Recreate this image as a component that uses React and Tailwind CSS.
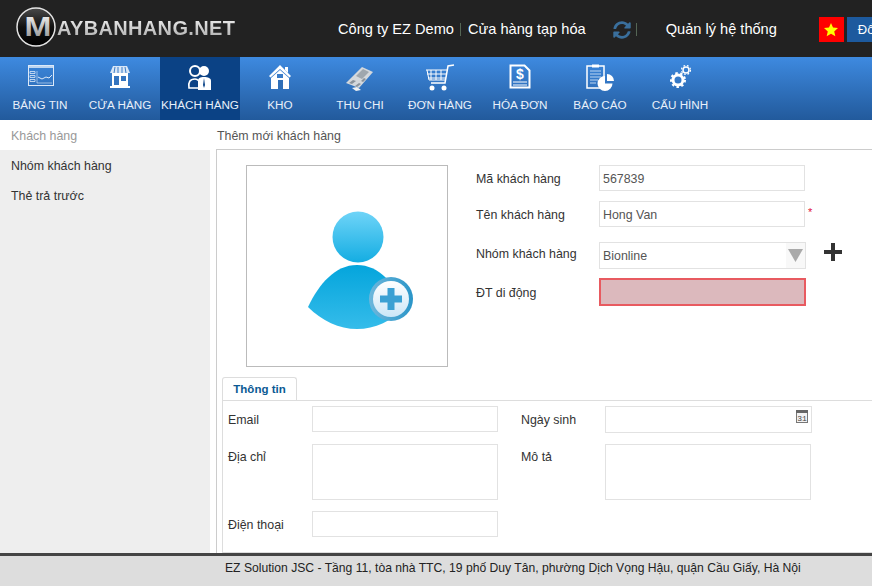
import React from 'react';
import { FaSyncAlt } from 'react-icons/fa';

const IconDashboard = () => (
  <svg viewBox="0 0 32 28" className="w-8 h-7 text-[#dce9f8]">
    <rect x="4.500" y="1.500" width="25" height="20" fill="none" stroke="currentColor" />
    <rect x="4" y="1" width="26" height="3" fill="currentColor" opacity="0.8" />
    <path d="M6 7.500h5v2H6zM6 11.500h5v2H6zM6 15.500h5v2H6z" fill="none" stroke="currentColor" strokeWidth="0.800" />
    <path d="M13 7v12h15" fill="none" stroke="currentColor" opacity="0.6" />
    <path d="M14 13l4 2 4-2 3 1 3-3" fill="none" stroke="currentColor" />
  </svg>
);

const IconStore = () => (
  <svg viewBox="0 0 32 28" className="w-8 h-7 text-white">
    <path d="M9 2h14l3 7H6z" fill="currentColor" opacity="0.8" />
    <path d="M11 3l-1 6M14 3v6M18 3v6M21 3l1 6" stroke="#3a7cc8" />
    <rect x="8" y="9" width="16" height="13" fill="currentColor" />
    <rect x="10" y="12" width="5" height="9" fill="#3474bf" />
    <rect x="17" y="12" width="5" height="5" fill="#3474bf" />
    <rect x="6" y="22" width="20" height="2" fill="currentColor" />
  </svg>
);

const IconCustomer = () => (
  <svg viewBox="0 0 32 28" className="w-8 h-7 text-white">
    <circle cx="11" cy="7" r="5" fill="none" stroke="currentColor" strokeWidth="2" />
    <path d="M5 24c-1-6 1-9 6-9 2 0 3 1 4 2v7z" fill="none" stroke="currentColor" strokeWidth="1.600" />
    <circle cx="20" cy="7" r="5" fill="currentColor" />
    <path d="M14 26V17c0-3 2-4 6-4s7 1 7 4v9z" fill="currentColor" />
    <path d="M20 14l-1 7 1 3 1-3z" fill="#0b4488" />
  </svg>
);

const IconHouse = () => (
  <svg viewBox="0 0 32 28" className="w-8 h-7 text-white">
    <path d="M16 1L5 12l1.500 1.500L16 5l9.500 8.500L27 12z" fill="currentColor" />
    <path d="M21 3h3v6l-3-3z" fill="currentColor" />
    <path d="M7 14l9-8 9 8v11H7z" fill="currentColor" />
    <rect x="13" y="10" width="6" height="4" fill="#3a7cc8" />
    <rect x="14" y="16" width="5" height="9" fill="#2f6fb8" />
  </svg>
);

const IconCash = () => (
  <svg viewBox="0 0 32 28" className="w-8 h-7 text-[#d4d8dc]">
    <path d="M2 19L18 3l11 5-14 16z" fill="currentColor" />
    <path d="M12 12l7-7 6 3-7 7z" fill="#9fa7ae" />
    <path d="M5 19l4-3 3 1-4 3zM11 22l4-3 2 1-4 3zM17 17l3-3 2 1-3 3z" fill="#8b939b" />
    <path d="M8 24l4 3 5-1-4-3z" fill="#eef0f2" />
  </svg>
);

const IconCart = () => (
  <svg viewBox="0 0 32 28" className="w-8 h-7 text-white">
    <path d="M30 1l-6 1-3 17H7" fill="none" stroke="currentColor" strokeWidth="1.500" />
    <path d="M2 6h21M3 10h19M4 14h18M7 6v10M12 6v10M17 6v10M3 6l2 10h16" fill="none" stroke="currentColor" />
    <circle cx="8" cy="24" r="2.500" fill="currentColor" />
    <circle cx="20" cy="24" r="2.500" fill="currentColor" />
  </svg>
);

const IconInvoice = () => (
  <svg viewBox="0 0 32 28" className="w-8 h-7 text-white">
    <path d="M6.500 1.500h14l5 5v17h-19z" fill="none" stroke="currentColor" strokeWidth="2" />
    <text x="16" y="15" textAnchor="middle" fill="currentColor" className="font-['Liberation_Sans',sans-serif] font-bold text-[14px]">$</text>
    <path d="M9 18h14M9 21h14" stroke="currentColor" />
  </svg>
);

const IconReport = () => (
  <svg viewBox="0 0 32 28" className="w-8 h-7 text-white">
    <rect x="3" y="2" width="17" height="22" fill="none" stroke="currentColor" strokeWidth="1.500" />
    <rect x="8" y="0.500" width="7" height="3" fill="currentColor" />
    <path d="M6 7h11M6 10h11M6 13h11M6 16h8M6 19h6" stroke="#bcd6f2" />
    <path d="M21 12a7.500 7.500 0 1 0 7.500 7.500H21z" fill="currentColor" />
    <path d="M23 10a7 7 0 0 1 7 7h-7z" fill="currentColor" />
  </svg>
);

const IconGear = () => (
  <svg viewBox="0 0 32 28" className="w-8 h-7 text-white">
    <circle cx="14" cy="16" r="5" fill="none" stroke="currentColor" strokeWidth="3" />
    <circle cx="14" cy="16" r="7" fill="none" stroke="currentColor" strokeWidth="2" strokeDasharray="2.500 2.500" />
    <circle cx="22" cy="6" r="3" fill="none" stroke="currentColor" strokeWidth="1.500" />
    <circle cx="22" cy="6" r="4.500" fill="none" stroke="currentColor" strokeWidth="1.200" strokeDasharray="1.800 1.800" />
  </svg>
);

const navItems = [
  { label: 'BẢNG TIN', icon: IconDashboard },
  { label: 'CỬA HÀNG', icon: IconStore },
  { label: 'KHÁCH HÀNG', icon: IconCustomer, active: true },
  { label: 'KHO', icon: IconHouse },
  { label: 'THU CHI', icon: IconCash },
  { label: 'ĐƠN HÀNG', icon: IconCart },
  { label: 'HÓA ĐƠN', icon: IconInvoice },
  { label: 'BÁO CÁO', icon: IconReport },
  { label: 'CẤU HÌNH', icon: IconGear },
];

const Logo = () => (
  <div className="flex items-center pl-[15px] pb-[3px] w-[338px] shrink-0">
    <svg viewBox="0 0 42 42" className="w-[42px] h-[42px] shrink-0 mb-[2px]">
      <defs>
        <linearGradient id="mark" x1="0" y1="0" x2="0" y2="1">
          <stop offset="0" stopColor="#ffffff" />
          <stop offset="1" stopColor="#8a8a8a" />
        </linearGradient>
        <linearGradient id="disc" x1="0" y1="0" x2="0" y2="1">
          <stop offset="0" stopColor="#4a4a4a" />
          <stop offset="0.500" stopColor="#111111" />
          <stop offset="1" stopColor="#000000" />
        </linearGradient>
      </defs>
      <circle cx="21" cy="21" r="19" fill="url(#disc)" stroke="#e4e4e4" strokeWidth="1.500" />
      <text x="0" y="0" textAnchor="middle" fill="url(#mark)" transform="translate(23 30) scale(1.150 1)" className="font-['Liberation_Sans',sans-serif] font-bold text-[28px]">M</text>
    </svg>
    <span className="text-[20px] font-bold tracking-[0.35px] bg-gradient-to-b from-white to-[#a0a0a0] bg-clip-text text-transparent">AYBANHANG.NET</span>
  </div>
);

const Field = ({ label, className, labelClass = 'pt-[2px]', children }) => (
  <div className={`flex ${className}`}>
    <span className={`w-[123px] shrink-0 text-[12.4px] text-[#333] ${labelClass}`}>{label}</span>
    {children}
  </div>
);

const inputClass = 'border border-[#e2e2e2] bg-white pl-[3px] pt-[2px] text-[12.4px] text-[#555] outline-none';

const Label = ({ children, className = '' }) => (
  <span className={`text-[12.4px] text-[#333] ${className}`}>{children}</span>
);

export default function App() {
  return (
    <div className="w-[872px] h-[586px] flex flex-col overflow-hidden bg-white font-['Liberation_Sans',Arial,sans-serif]">
      <header className="h-[57px] shrink-0 bg-[#222222] flex items-center pt-[2px] text-[14.6px] text-white whitespace-nowrap">
        <Logo />
        <span>Công ty EZ Demo</span>
        <span className="ml-[6px] h-[13px] border-l border-[#556655]" />
        <span className="ml-[7px]">Cửa hàng tạp hóa</span>
        <FaSyncAlt className="ml-[27px] w-[18px] h-[18px] shrink-0 text-[#3a6f9c]" />
        <span className="ml-[5px] h-[13px] border-l border-[#556655]" />
        <span className="ml-[29px]">Quản lý hệ thống</span>
        <div className="ml-[42px] w-[25px] h-[25px] shrink-0 bg-[#ff0000] flex items-center justify-center">
          <svg viewBox="0 0 20 20" className="w-[14px] h-[14px]">
            <path d="M10 0l2.900 6.600 7.100.7-5.400 4.700 1.600 7-6.200-3.700-6.200 3.700 1.600-7L0 7.300l7.100-.7z" fill="#ffff00" />
          </svg>
        </div>
        <div className="ml-[3px] w-[40px] h-[25px] shrink-0 bg-[#1d5a9e] pl-[11px] text-[13px] leading-[25px]">Đổi</div>
      </header>

      <nav className="h-[63px] shrink-0 flex bg-gradient-to-b from-[#3e8ae0] to-[#225a9c]">
        {navItems.map(({ label, icon: Icon, active }) => (
          <div key={label} className={`w-[80px] flex flex-col items-center pt-[7px] ${active ? 'bg-[#0b4285]' : ''}`}>
            <Icon />
            <span className="text-[11.7px] leading-[26px] text-[#e8f0fa] whitespace-nowrap">{label}</span>
          </div>
        ))}
      </nav>

      <div className="flex-1 flex min-h-0">
        <aside className="w-[210px] shrink-0 flex flex-col text-[12.4px]">
          <div className="h-[30px] pl-[11px] leading-[32px] text-[#999]">Khách hàng</div>
          <div className="flex-1 bg-[#eeeeee] pl-[11px] text-[#333]">
            <div className="h-[30px] leading-[32px]">Nhóm khách hàng</div>
            <div className="h-[30px] leading-[32px]">Thẻ trả trước</div>
          </div>
        </aside>

        <main className="flex-1 ml-[6px] flex flex-col min-w-0">
          <div className="h-[29px] pl-[1px] leading-[32px] text-[12.4px] text-[#555]">Thêm mới khách hàng</div>
          <div className="flex-1 border-l border-t border-[#cccccc] flex flex-col">
            <div className="flex pt-[15px] pl-[29px]">
              <div className="w-[202px] h-[202px] shrink-0 border border-[#bbbbbb]">
                <svg viewBox="0 0 200 200" className="w-full h-full">
                  <defs>
                    <linearGradient id="head" x1="0" y1="0" x2="0" y2="1">
                      <stop offset="0" stopColor="#6fd4f8" />
                      <stop offset="1" stopColor="#14ade2" />
                    </linearGradient>
                    <linearGradient id="body" x1="0" y1="0" x2="0" y2="1">
                      <stop offset="0" stopColor="#04a5dc" />
                      <stop offset="1" stopColor="#35bcea" />
                    </linearGradient>
                    <linearGradient id="badge" x1="0" y1="0" x2="0" y2="1">
                      <stop offset="0" stopColor="#ffffff" />
                      <stop offset="1" stopColor="#cbe6f7" />
                    </linearGradient>
                    <linearGradient id="ring" x1="0" y1="0" x2="1" y2="0">
                      <stop offset="0" stopColor="#6db7dc" />
                      <stop offset="1" stopColor="#2a95c8" />
                    </linearGradient>
                  </defs>
                  <circle cx="111" cy="71" r="25.500" fill="url(#head)" />
                  <path d="M61 141C72 118 88 99 110 99C132 99 148 118 159 141C145 155 128 163 110 163C92 163 75 155 61 141Z" fill="url(#body)" />
                  <circle cx="144" cy="133" r="22" fill="url(#ring)" />
                  <circle cx="144" cy="133" r="18" fill="url(#badge)" />
                  <path d="M140.500 122h7v7.500h7.500v7h-7.500v7.500h-7v-7.500H133v-7h7.500z" fill="#3aa0d3" />
                </svg>
              </div>
              <div className="ml-[28px] flex flex-col">
                <Field label="Mã khách hàng" className="items-center">
                  <input readOnly value="567839" className={`${inputClass} w-[206px] h-[26px]`} />
                </Field>
                <Field label="Tên khách hàng" className="items-center mt-[10px]">
                  <input readOnly value="Hong Van" className={`${inputClass} w-[206px] h-[26px]`} />
                  <span className="ml-[3px] -mt-[3px] text-[11px] text-[#e0103c]">*</span>
                </Field>
                <Field label="Nhóm khách hàng" className="mt-[15px]" labelClass="pt-[3px]">
                  <div className="w-[207px] h-[27px] flex border border-[#e2e2e2] text-[12.4px] text-[#555] leading-[27px]">
                    <span className="flex-1 pl-[3px]">Bionline</span>
                    <div className="w-[19px] bg-[#f8f8f8] flex items-center justify-center">
                      <svg viewBox="0 0 15 13" className="w-[15px] h-[13px]">
                        <path d="M0 0h15l-7.500 13z" fill="#aaaaaa" />
                      </svg>
                    </div>
                  </div>
                  <svg viewBox="0 0 18 18" className="ml-[18px] mt-[1px] w-[18px] h-[18px]">
                    <path d="M7 0h4v7h7v4h-7v7H7v-7H0V7h7z" fill="#333333" />
                  </svg>
                </Field>
                <Field label="ĐT di động" className="items-center mt-[9px]">
                  <input readOnly className="w-[207px] h-[28px] border-2 border-[#e85a60] bg-[#dcb9bd] outline-none" />
                </Field>
              </div>
            </div>

            <div className="mt-[10px] ml-[5px] flex-1 flex flex-col">
              <div className="h-[23px] w-[75px] border border-b-0 border-[#dddddd] rounded-t-[3px] text-center text-[11.5px] font-bold leading-[23px] text-[#0b5a94]">Thông tin</div>
              <div className="flex-1 border-l border-t border-b border-[#dddddd] pl-[5px] pt-[5px] grid grid-cols-[84px_186px_23px_84px_207px] grid-rows-[27px_56px_26px] gap-y-[11px]">
                <Label className="self-center pt-[2px]">Email</Label>
                <input readOnly className={`${inputClass} h-[26px]`} />
                <span />
                <Label className="self-center pt-[2px]">Ngày sinh</Label>
                <div className="relative border border-[#e2e2e2] h-[27px]">
                  <svg viewBox="0 0 12 14" className="absolute right-[3px] top-[2px] w-[12px] h-[14px]">
                    <rect x="0.500" y="2.500" width="11" height="11" fill="#f2f2f2" stroke="#777" />
                    <rect x="0" y="1" width="12" height="3" fill="#666" />
                    <text x="6" y="12" textAnchor="middle" fill="#444" className="font-['Liberation_Mono',monospace] text-[8px]">31</text>
                  </svg>
                </div>

                <Label className="pt-[4px]">Địa chỉ</Label>
                <textarea readOnly className="border border-[#e2e2e2] h-[56px] resize-none outline-none" />
                <span />
                <Label className="pt-[4px]">Mô tả</Label>
                <textarea readOnly className="border border-[#e2e2e2] w-[206px] h-[56px] resize-none outline-none" />

                <Label className="self-center pt-[2px]">Điện thoại</Label>
                <input readOnly className={`${inputClass} h-[26px]`} />
              </div>
            </div>
          </div>
        </main>
      </div>

      <footer className="h-[33px] shrink-0 border-t-[3px] border-[#444444] bg-[#dddddd] pl-[225px] text-[12.15px] leading-[25px] text-[#222]">
        EZ Solution JSC - Tầng 11, tòa nhà TTC, 19 phố Duy Tân, phường Dịch Vọng Hậu, quận Cầu Giấy, Hà Nội
      </footer>
    </div>
  );
}
